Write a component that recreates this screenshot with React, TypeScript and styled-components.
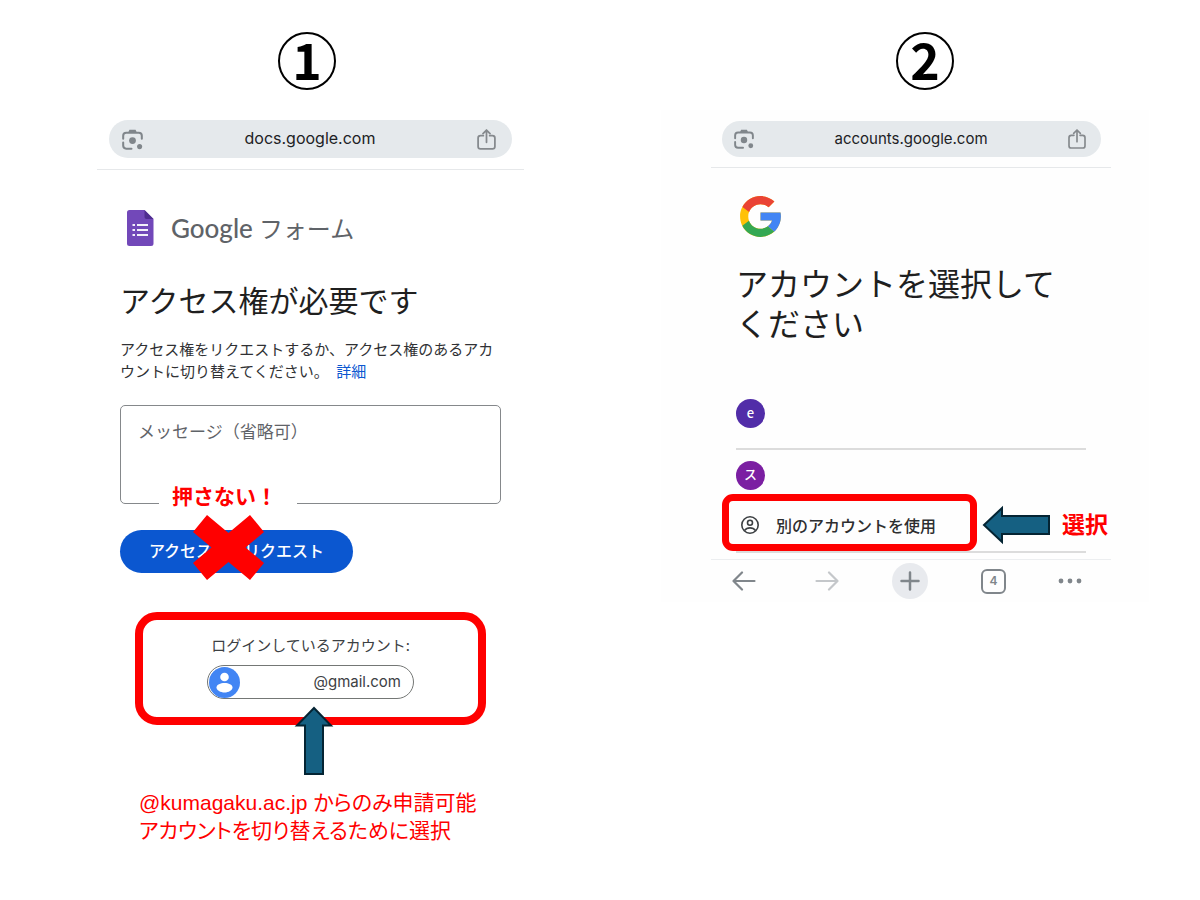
import React from "react";
import styled, { createGlobalStyle } from "styled-components";

const jp = `"Noto Sans CJK JP", sans-serif`;
const ui = `Inter, "Noto Sans CJK JP", sans-serif`;
const alertRed = "#ff0000";

const GlobalStyle = createGlobalStyle`
  *, *::before, *::after { box-sizing: border-box; }
  body { margin: 0; background: #fff; font-family: ${jp}; color: #1f1f1f; }
  h1, p { margin: 0; }
  button { font: inherit; border: 0; padding: 0; background: none; cursor: pointer; }
  svg { display: block; flex: none; }
`;

const Guide = styled.main`
  display: grid;
  grid-template-columns: minmax(0, 427fr) minmax(0, 488fr);
  column-gap: 137px;
  align-items: start;
  padding: 32px 51px 48px 97px;
`;

const Step = styled.section<{ $indent: string }>`
  display: flex;
  flex-direction: column;
  gap: 20px;
  & > header { padding-left: ${(p) => p.$indent}; }
`;

const StepNumber = styled.div`
  display: flex;
  justify-content: center;
  width: 58px;
  height: 58px;
  border: 2px solid #000;
  border-radius: 50%;
  color: #000;
  font-size: 50px;
  line-height: 48px;
  font-weight: 700;
`;

const Screen = styled.div<{ $framed?: boolean }>`
  padding: ${(p) => (p.$framed ? "0 38px 0 50px" : "0")};
  background: ${(p) => (p.$framed ? "#fefefe" : "#fff")};
`;

const BrowserBar = styled.div<{ $compact?: boolean }>`
  padding: ${(p) => (p.$compact ? "11px 10px 10px 11px" : "10px 12px 11px")};
  border-bottom: 1px solid #e6e8ea;
`;

const AddressPill = styled.div<{ $compact?: boolean }>`
  display: flex;
  align-items: center;
  justify-content: space-between;
  height: ${(p) => (p.$compact ? 36 : 38)}px;
  padding: 0 ${(p) => (p.$compact ? 15 : 16)}px 0 ${(p) => (p.$compact ? 12 : 13)}px;
  border-radius: 19px;
  background: #e5e9ec;
  color: #202124;
  font-family: ${ui};
  font-size: ${(p) => (p.$compact ? 15 : 16)}px;
  & > span { padding-bottom: 2px; }
`;

const IconButton = styled.button`
  display: flex;
  align-items: center;
  justify-content: flex-start;
`;

const Body = styled.div<{ $inset: string }>`
  padding: 0 ${(p) => p.$inset};
`;

const Brand = styled.div`
  display: flex;
  align-items: center;
  gap: 17px;
  height: 36px;
  margin-top: 40px;
  padding-left: 7px;
`;

const BrandName = styled.div`
  display: flex;
  align-items: baseline;
  gap: 6px;
  color: #5f6368;
  font-size: 24px;
  line-height: 36px;
`;

const Wordmark = styled.span`
  font-family: Lato, sans-serif;
  font-size: 26px;
  font-weight: 500;
`;

const Title = styled.h1<{ $size: number; $top: number }>`
  margin-top: ${(p) => p.$top}px;
  font-size: ${(p) => p.$size}px;
  line-height: 40px;
  font-weight: 400;
`;

const Lead = styled.p`
  margin-top: 19px;
  color: #303134;
  font-size: 15px;
  line-height: 22px;
  & a { margin-left: 4px; color: #0b57d0; text-decoration: none; }
`;

const MessageField = styled.div`
  position: relative;
  height: 99px;
  margin-top: 23px;
`;

const MessageInput = styled.textarea`
  display: block;
  width: 100%;
  height: 100%;
  padding: 13px 17px;
  border: 1px solid #85888b;
  border-radius: 5px;
  background: transparent;
  font-family: ${jp};
  font-size: 17px;
  line-height: 24px;
  resize: none;
  outline: none;
  &::placeholder { color: #5f6368; opacity: 1; }
`;

const Warning = styled.strong`
  position: absolute;
  left: 39px;
  bottom: -5px;
  width: 138px;
  padding-left: 13px;
  background: #fff;
  color: ${alertRed};
  font-size: 21px;
  line-height: 28px;
`;

const RequestRow = styled.div`
  position: relative;
  width: 233px;
  margin-top: 26px;
`;

const RequestButton = styled.button`
  width: 100%;
  height: 43px;
  padding-bottom: 3px;
  border-radius: 22px;
  background: #0b57d0;
  color: #fff;
  font-size: 16px;
  font-weight: 500;
`;

const Cross = styled.svg`
  position: absolute;
  left: 72px;
  top: -15px;
  pointer-events: none;
`;

const AccountBox = styled.div`
  position: relative;
  display: flex;
  flex-direction: column;
  align-items: center;
  gap: 9px;
  margin: 39px 15px 0;
  padding: 14px 0 18px;
  border: 8px solid ${alertRed};
  border-radius: 22px;
  color: #3c4043;
  font-size: 15px;
  line-height: 22px;
`;

const AccountChip = styled.button`
  display: flex;
  align-items: center;
  justify-content: space-between;
  width: 207px;
  height: 34px;
  padding: 0 12px 0 1px;
  border: 1px solid #747775;
  border-radius: 17px;
  color: #3c4043;
  font-family: ${ui};
  font-size: 15px;
`;

const UpArrow = styled.svg`
  position: absolute;
  left: 50%;
  top: 86px;
  margin-left: -17px;
`;

const Note = styled.p`
  margin-top: 64px;
  padding-left: 19px;
  color: ${alertRed};
  font-family: "Liberation Sans", ${jp};
  font-size: 21px;
  line-height: 28px;
  font-feature-settings: "palt";
`;

const LogoMark = styled.div`
  margin-top: 24px;
`;

const AccountList = styled.div`
  display: flex;
  flex-direction: column;
  margin-top: 37px;
`;

const AccountRow = styled.div<{ $height: number; $rule: number }>`
  position: relative;
  display: flex;
  align-items: center;
  height: ${(p) => p.$height}px;
  border-bottom: ${(p) => p.$rule}px solid #dcdcdc;
`;

const Avatar = styled.button<{ $color: string }>`
  width: 29px;
  height: 29px;
  padding-bottom: 2px;
  border-radius: 50%;
  background: ${(p) => p.$color};
  color: #fff;
  font-size: 13px;
  line-height: 26px;
  font-weight: 500;
`;

const OtherAccount = styled.button`
  display: flex;
  align-items: center;
  gap: 16px;
  padding: 0 0 2px 4px;
  color: #2d2e30;
  font-size: 16px;
  line-height: 24px;
  font-weight: 500;
`;

const Highlight = styled.span`
  position: absolute;
  left: -14px;
  top: -6px;
  width: 255px;
  height: 57px;
  border: 7px solid ${alertRed};
  border-radius: 11px;
  pointer-events: none;
`;

const Callout = styled.strong`
  position: absolute;
  left: 246px;
  top: 5px;
  display: flex;
  align-items: center;
  gap: 11px;
  height: 40px;
  color: ${alertRed};
  font-size: 23px;
  white-space: nowrap;
  & > span { padding-bottom: 4px; }
`;

const Toolbar = styled.nav`
  display: grid;
  grid-template-columns: 83fr 77fr 89fr 77fr 24fr;
  align-items: center;
  height: 43px;
  margin-top: 6px;
  padding: 0 29px 0 21px;
  border-top: 1px solid #eceef0;
`;

const NewTab = styled(IconButton)`
  justify-content: center;
  width: 36px;
  height: 36px;
  border-radius: 50%;
  background: #e8eaee;
`;

const TabCount = styled.button`
  width: 25px;
  height: 25px;
  border: 2px solid #80868b;
  border-radius: 6px;
  color: #80868b;
  font-family: ${ui};
  font-size: 12px;
  line-height: 20px;
  font-weight: 600;
`;

const LensIcon = ({ size }: { size: number }) => (
  <svg width={size} height={size} viewBox="0 0 62 62" fill="none" stroke="#80868b" strokeWidth="6">
    <path d="M3.500 29V20a9 9 0 0 1 9-9H49.500a9 9 0 0 1 9 9V29" strokeLinecap="round" />
    <path d="M3.500 40V49a9 9 0 0 0 9 9H28" strokeLinecap="round" />
    <path d="M18 11L22 2H40L44 11Z" fill="#80868b" stroke="none" />
    <circle cx="31" cy="34" r="10" fill="#80868b" stroke="none" />
    <circle cx="52" cy="52" r="7.500" fill="#80868b" stroke="none" />
  </svg>
);

const ShareIcon = ({ size }: { size: number }) => (
  <svg width={size - 2} height={size} viewBox="0 0 54 60" fill="none" stroke="#85898d" strokeWidth="5" strokeLinecap="round" strokeLinejoin="round">
    <path d="M18 19H10a7 7 0 0 0-7 7V50a7 7 0 0 0 7 7H44a7 7 0 0 0 7-7V26a7 7 0 0 0-7-7H36" />
    <path d="M27 38V4M17 13L27 3L37 13" />
  </svg>
);

const FormsIcon = () => (
  <svg width="27" height="36" viewBox="0 0 27 36">
    <path d="M2.500 0H17.500L26.500 9V33.500A2.500 2.500 0 0 1 24 36H2.500A2.500 2.500 0 0 1 0 33.500V2.500A2.500 2.500 0 0 1 2.500 0Z" fill="#7248b9" />
    <path d="M17.500 0L26.500 9H19.500A2 2 0 0 1 17.500 7Z" fill="#4f2d8f" />
    <path d="M10 15H21M10 20H21M10 25H21" stroke="#f3effa" strokeWidth="2" />
    <path d="M5.500 15H8M5.500 20H8M5.500 25H8" stroke="#f3effa" strokeWidth="2.200" />
  </svg>
);

const PersonIcon = () => (
  <svg width="31" height="31" viewBox="0 0 31 31">
    <circle cx="15.500" cy="15.500" r="15.500" fill="#4285f4" />
    <circle cx="15.500" cy="10" r="4.300" fill="#fff" />
    <path d="M7.500 20.500C7.500 17.500 11.500 16 15.500 16S23.500 17.500 23.500 20.500C23.500 23.300 19.500 25.500 15.500 25.500S7.500 23.300 7.500 20.500Z" fill="#fff" />
  </svg>
);

const GoogleLogo = () => (
  <svg width="49" height="49" viewBox="0 0 48 48" role="img" aria-label="Google">
    <path fill="#FFC107" d="M43.611 20.083H42V20H24v8h11.303c-1.649 4.657-6.080 8-11.303 8-6.627 0-12-5.373-12-12s5.373-12 12-12c3.059 0 5.842 1.154 7.961 3.039l5.657-5.657C34.046 6.053 29.268 4 24 4 12.955 4 4 12.955 4 24s8.955 20 20 20 20-8.955 20-20c0-1.341-.138-2.650-.389-3.917z" />
    <path fill="#EA4335" d="M6.306 14.691l6.571 4.819C14.655 15.108 18.961 12 24 12c3.059 0 5.842 1.154 7.961 3.039l5.657-5.657C34.046 6.053 29.268 4 24 4 16.318 4 9.656 8.337 6.306 14.691z" />
    <path fill="#34A853" d="M24 44c5.166 0 9.860-1.977 13.409-5.192l-6.190-5.238C29.211 35.091 26.715 36 24 36c-5.202 0-9.619-3.317-11.283-7.946l-6.522 5.025C9.505 39.556 16.227 44 24 44z" />
    <path fill="#4285F4" d="M43.611 20.083H42V20H24v8h11.303c-.792 2.237-2.231 4.166-4.087 5.571l6.193 5.238C36.971 39.205 44 34 44 24c0-1.341-.138-2.650-.389-3.917z" />
  </svg>
);

const UserCircleIcon = () => (
  <svg width="20" height="20" viewBox="0 0 20 20" fill="none" stroke="#3c4043" strokeWidth="1.600">
    <circle cx="10" cy="10" r="8.200" />
    <circle cx="10" cy="7.800" r="2.500" />
    <path d="M4.500 15.500C6 13.500 8 12.900 10 12.900S14 13.500 15.500 15.500" />
  </svg>
);

const BackIcon = ({ color, flip }: { color: string; flip?: boolean }) => (
  <svg width="24" height="20" viewBox="0 0 24 20" fill="none" stroke={color} strokeWidth="2.200" strokeLinecap="round" strokeLinejoin="round">
    <path d={flip ? "M1.500 10H22.500M14 1.500L22.500 10L14 18.500" : "M22.500 10H1.500M10 1.500L1.500 10L10 18.500"} />
  </svg>
);

function Address({ host, compact }: { host: string; compact?: boolean }) {
  return (
    <BrowserBar $compact={compact}>
      <AddressPill $compact={compact}>
        <IconButton aria-label="レンズで検索"><LensIcon size={compact ? 20 : 21} /></IconButton>
        <span>{host}</span>
        <IconButton aria-label="共有"><ShareIcon size={compact ? 20 : 21} /></IconButton>
      </AddressPill>
    </BrowserBar>
  );
}

export default function App() {
  return (
    <>
      <GlobalStyle />
      <Guide>
        <Step $indent="181px">
          <header><StepNumber>1</StepNumber></header>
          <Screen>
            <Address host="docs.google.com" />
            <Body $inset="23px">
              <Brand>
                <FormsIcon />
                <BrandName><Wordmark>Google</Wordmark><span>フォーム</span></BrandName>
              </Brand>
              <Title $size={30} $top={33}>アクセス権が必要です</Title>
              <Lead>
                アクセス権をリクエストするか、アクセス権のあるアカウントに切り替えてください。 <a href="#details">詳細</a>
              </Lead>
              <MessageField>
                <MessageInput aria-label="メッセージ（省略可）" placeholder="メッセージ（省略可）" />
                <Warning>押さない！</Warning>
              </MessageField>
              <RequestRow>
                <RequestButton>アクセス権をリクエスト</RequestButton>
                <Cross width="73" height="65" viewBox="0 0 73 65" aria-hidden="true">
                  <path d="M15 0L36.500 18L58 0L72 17L53.500 32.500L72 48L58 65L36.500 47L15 65L1 48L19.500 32.500L1 17Z" fill={alertRed} />
                </Cross>
              </RequestRow>
              <AccountBox>
                <span>ログインしているアカウント:</span>
                <AccountChip><PersonIcon /><span>@gmail.com</span></AccountChip>
                <UpArrow width="40" height="70" viewBox="0 0 40 70" aria-hidden="true">
                  <path d="M20 2L37 19.500H29V68H11V19.500H3Z" fill="#156082" stroke="#042433" strokeWidth="2" />
                </UpArrow>
              </AccountBox>
              <Note>
                @kumagaku.ac.jp からのみ申請可能<br />アカウントを切り替えるために選択
              </Note>
            </Body>
          </Screen>
        </Step>

        <Step $indent="235px">
          <header><StepNumber>2</StepNumber></header>
          <Screen $framed>
            <Address host="accounts.google.com" compact />
            <Body $inset="25px">
              <LogoMark><GoogleLogo /></LogoMark>
              <Title $size={32} $top={21}>アカウントを選択してください</Title>
              <AccountList>
                <AccountRow $height={71} $rule={2}><Avatar $color="#512da8">e</Avatar></AccountRow>
                <AccountRow $height={50} $rule={0}><Avatar $color="#7b1fa2">ス</Avatar></AccountRow>
                <AccountRow $height={53} $rule={2}>
                  <OtherAccount><UserCircleIcon />別のアカウントを使用</OtherAccount>
                  <Highlight />
                  <Callout>
                    <svg width="69" height="40" viewBox="0 0 69 40" aria-hidden="true">
                      <path d="M2 20L20 3V11H67V29H20V37Z" fill="#156082" stroke="#042433" strokeWidth="2" />
                    </svg>
                    <span>選択</span>
                  </Callout>
                </AccountRow>
              </AccountList>
            </Body>
            <Toolbar aria-label="ブラウザ">
              <IconButton aria-label="戻る"><BackIcon color="#80868b" /></IconButton>
              <IconButton aria-label="進む"><BackIcon color="#c4c7ca" flip /></IconButton>
              <NewTab aria-label="新しいタブ">
                <svg width="20" height="20" viewBox="0 0 20 20" stroke="#80868b" strokeWidth="2.500" strokeLinecap="round">
                  <path d="M10 1.500V18.500M1.500 10H18.500" />
                </svg>
              </NewTab>
              <TabCount aria-label="タブ 4">4</TabCount>
              <IconButton aria-label="メニュー">
                <svg width="24" height="6" viewBox="0 0 24 6" fill="#80868b">
                  <circle cx="3" cy="3" r="2.400" /><circle cx="12" cy="3" r="2.400" /><circle cx="21" cy="3" r="2.400" />
                </svg>
              </IconButton>
            </Toolbar>
          </Screen>
        </Step>
      </Guide>
    </>
  );
}
